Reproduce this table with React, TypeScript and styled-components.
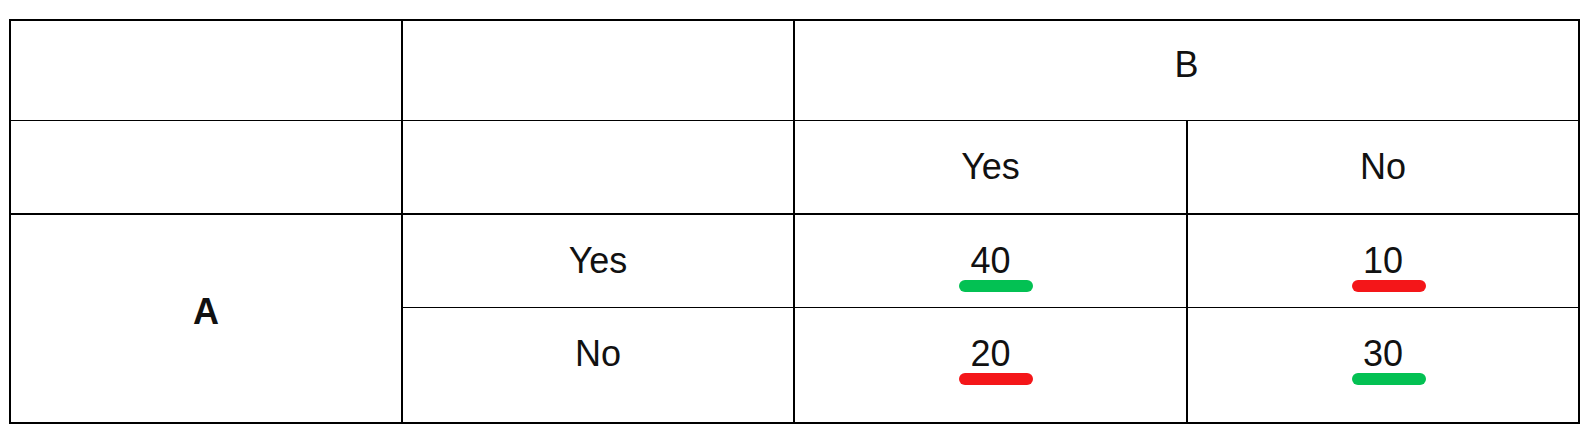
import React from 'react';
import styled, { createGlobalStyle } from 'styled-components';

const GlobalStyle = createGlobalStyle`
  html, body {
    margin: 0;
    padding: 0;
    background: #ffffff;
  }
  body {
    font-family: 'Liberation Sans', Arial, sans-serif;
    color: #000000;
  }
`;

const Page = styled.div`
  width: 1584px;
  height: 429px;
  padding: 19px 0 0 9px;
  box-sizing: border-box;
`;

const Table = styled.div`
  display: grid;
  grid-template-columns: 392px 392px 393px 392px;
  grid-template-rows: 100px 94px 93px 116px;
  width: 1571px;
  box-sizing: border-box;
  border-top: 2px solid #000;
  border-left: 2px solid #000;
`;

const Cell = styled.div<{ $bottom: number; $span?: number; $rows?: number; $pb?: number; $bold?: boolean }>`
  grid-column: span ${({ $span }) => $span || 1};
  grid-row: span ${({ $rows }) => $rows || 1};
  box-sizing: border-box;
  border-right: 2px solid #000;
  border-bottom: ${({ $bottom }) => $bottom}px solid #000;
  padding-bottom: ${({ $pb }) => $pb || 0}px;
  display: flex;
  align-items: center;
  justify-content: center;
  font-size: 36px;
  font-weight: ${({ $bold }) => ($bold ? 700 : 400)};
  color: #111;
`;

const Mark = styled.span<{ $tone: 'good' | 'bad' }>`
  position: relative;
  display: inline-block;
  line-height: normal;

  &::after {
    content: '';
    position: absolute;
    left: -11px;
    top: 40px;
    width: 74px;
    height: 12px;
    border-radius: 6px;
    background: ${({ $tone }) => ($tone === 'good' ? '#03c153' : '#f41619')};
  }
`;

const App = () => {
  return (
    <Page>
      <GlobalStyle />
      <Table>
        <Cell $bottom={1} />
        <Cell $bottom={1} />
        <Cell $bottom={1} $span={2} $pb={11}>
          B
        </Cell>

        <Cell $bottom={2} />
        <Cell $bottom={2} />
        <Cell $bottom={2}>Yes</Cell>
        <Cell $bottom={2}>No</Cell>

        <Cell $bottom={2} $rows={2} $pb={13} $bold>
          A
        </Cell>
        <Cell $bottom={1}>Yes</Cell>
        <Cell $bottom={1}>
          <Mark $tone="good">40</Mark>
        </Cell>
        <Cell $bottom={1}>
          <Mark $tone="bad">10</Mark>
        </Cell>

        <Cell $bottom={2} $pb={22}>
          No
        </Cell>
        <Cell $bottom={2} $pb={22}>
          <Mark $tone="bad">20</Mark>
        </Cell>
        <Cell $bottom={2} $pb={22}>
          <Mark $tone="good">30</Mark>
        </Cell>
      </Table>
    </Page>
  );
};

export default App;
